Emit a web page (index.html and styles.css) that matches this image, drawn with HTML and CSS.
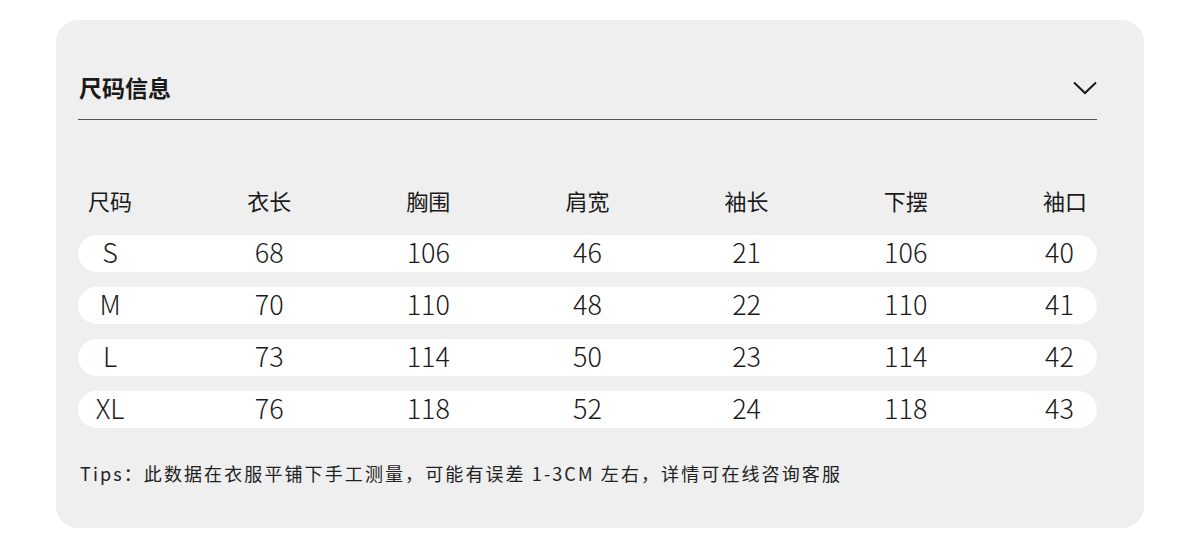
FILE: index.html
```html
<!DOCTYPE html>
<html lang="zh">
<head>
<meta charset="utf-8">
<link rel="stylesheet" href="styles.css">
</head>
<body>
<div class="card">
  <div class="head">
    <div class="title">尺码信息</div>
    <svg class="chev" width="24" height="14" viewBox="0 0 24 14"><polyline points="1,1.5 12,12 23,1.5" fill="none" stroke="#1a1a1a" stroke-width="2"/></svg>
  </div>
  <div class="table">
    <div class="row th"><span>尺码</span><span>衣长</span><span>胸围</span><span>肩宽</span><span>袖长</span><span>下摆</span><span>袖口</span></div>
    <div class="row pill"><span>S</span><span>68</span><span>106</span><span>46</span><span>21</span><span>106</span><span>40</span></div>
    <div class="row pill"><span>M</span><span>70</span><span>110</span><span>48</span><span>22</span><span>110</span><span>41</span></div>
    <div class="row pill"><span>L</span><span>73</span><span>114</span><span>50</span><span>23</span><span>114</span><span>42</span></div>
    <div class="row pill"><span>XL</span><span>76</span><span>118</span><span>52</span><span>24</span><span>118</span><span>43</span></div>
  </div>
  <p class="tips">Tips：此数据在衣服平铺下手工测量，可能有误差 1-3CM 左右，详情可在线咨询客服</p>
</div>
</body>
</html>
```
FILE: styles.css
```css
html, body {
  margin: 0;
  padding: 0;
  background: #ffffff;
}
body {
  font-family: "Noto Sans CJK SC", "Noto Sans", sans-serif;
  color: #1a1a1a;
}
.card {
  margin: 20px 0 0 56px;
  width: 1088px;
  height: 508px;
  box-sizing: border-box;
  background: #efefef;
  border-radius: 22px;
  padding: 0 47px 0 22px;
}
.head {
  box-sizing: border-box;
  height: 100px;
  padding-top: 36px;
  display: flex;
  align-items: center;
  justify-content: space-between;
  border-bottom: 1px solid #555;
}
.title {
  font-size: 23px;
  font-weight: 700;
  line-height: 1;
  margin-left: 1px;
}
.chev {
  display: block;
  margin-top: 0;
}
.table {
  margin-top: 61px;
  display: flex;
  flex-direction: column;
  gap: 15px;
}
.row {
  height: 37px;
  display: grid;
  grid-template-columns: repeat(7, 64px);
  justify-content: space-between;
  align-items: center;
}
.row span {
  text-align: center;
  white-space: nowrap;
}
.th {
  font-size: 22px;
  margin-bottom: 2px;
}
.pill {
  box-sizing: border-box;
  background: #ffffff;
  border-radius: 19px;
  font-size: 27px;
  font-weight: 300;
  padding-bottom: 5px;
}
.pill span {
  line-height: 1;
}
.pill span:last-child {
  padding-right: 11px;
}
.tips {
  margin: 33px 0 0 2px;
  font-size: 18px;
  line-height: 24px;
  letter-spacing: 2.1px;
  color: #222;
}
```
